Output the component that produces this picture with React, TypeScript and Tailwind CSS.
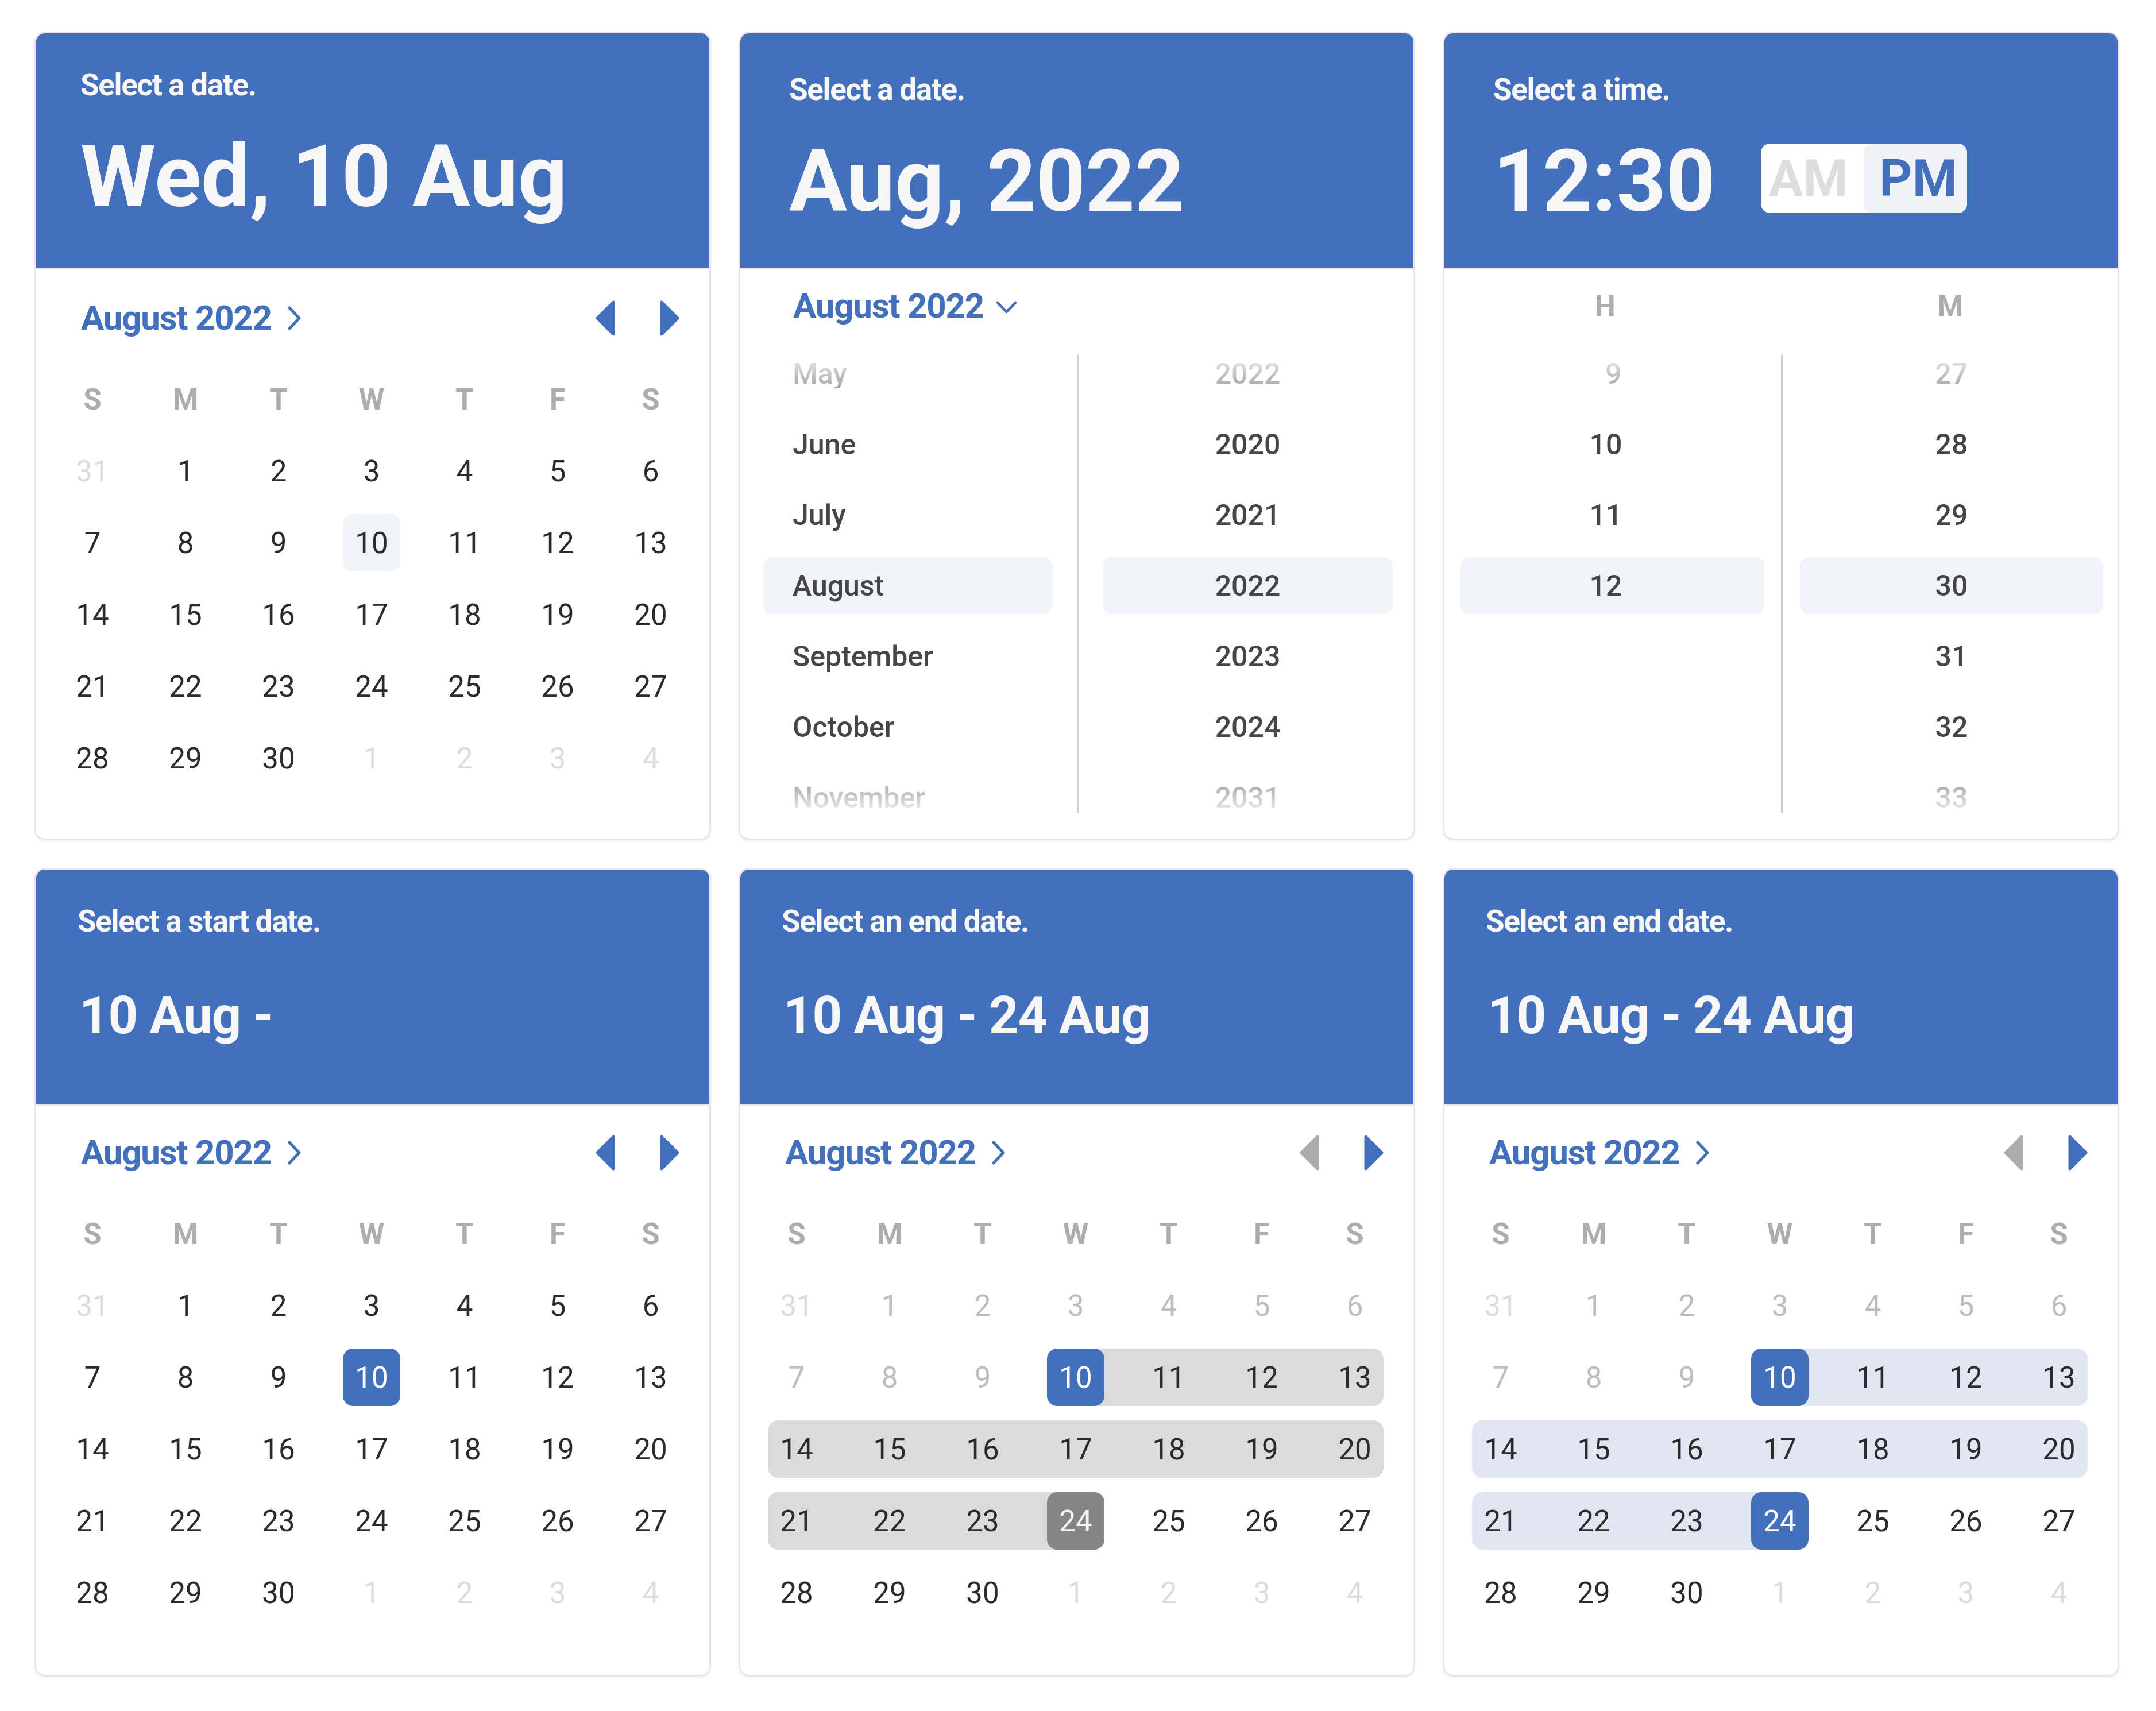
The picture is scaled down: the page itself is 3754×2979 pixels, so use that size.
import clsx from 'clsx';
import type { ReactNode } from 'react';

type Tone = 'normal' | 'outside' | 'disabled' | 'soft' | 'blue' | 'dark';
type Mode = 'soft' | 'blue' | 'rangeGray' | 'rangeBlue';

const TONES: Record<Tone, string> = {
    normal: 'text-[#2b2b2b]',
    outside: 'text-[#dcdcdc]',
    disabled: 'text-[#bdbdbd]',
    soft: 'bg-[#f0f3f9] text-[#2b2b2b]',
    blue: 'bg-[#4270bc] text-white',
    dark: 'bg-[#858585] text-[#f5f5f5]',
};

const WEEKS = [
    [31, 1, 2, 3, 4, 5, 6],
    [7, 8, 9, 10, 11, 12, 13],
    [14, 15, 16, 17, 18, 19, 20],
    [21, 22, 23, 24, 25, 26, 27],
    [28, 29, 30, 1, 2, 3, 4],
];

// which cells of each week sit on the range band
const BANDS: (number[] | null)[] = [null, [3, 6], [0, 6], [0, 3], null];

function toneFor(mode: Mode, w: number, i: number, n: number): Tone {
    const outside = (w === 0 && i === 0) || (w === 4 && i >= 3);
    if (outside) return 'outside';
    if (mode === 'soft' || mode === 'blue') {
        return n === 10 ? mode : 'normal';
    }
    if (n < 10) return 'disabled';
    if (n === 10) return 'blue';
    if (n === 24) return mode === 'rangeGray' ? 'dark' : 'blue';
    return 'normal';
}

function Card({ children }: { children: ReactNode }) {
    return (
        <div className="flex h-[1408px] w-[1178px] shrink-0 flex-col overflow-hidden rounded-[18px] border-[3px] border-[#e8e8e8] bg-white shadow-[0_3px_4px_rgba(0,0,0,0.04)]">
            {children}
        </div>
    );
}

function Header({ className, children }: { className?: string; children: ReactNode }) {
    return (
        <div
            className={clsx(
                'flex h-[411px] shrink-0 flex-col border-b-[3px] border-[#e6e6e6] bg-[#4270bc] text-[#f7f7f7]',
                className
            )}
        >
            {children}
        </div>
    );
}

function Label({ children }: { children: ReactNode }) {
    return <div className="text-[53px] font-bold leading-none tracking-[-0.025em]">{children}</div>;
}

function Caret({ dir, muted }: { dir: 'left' | 'right'; muted?: boolean }) {
    return (
        <svg
            width="34"
            height="62"
            viewBox="0 0 34 62"
            className={muted ? 'text-[#acacac]' : 'text-[#4270bc]'}
        >
            <path
                d={dir === 'left' ? 'M31 3 L31 59 L3 31 Z' : 'M3 3 L3 59 L31 31 Z'}
                fill="currentColor"
                stroke="currentColor"
                strokeWidth="5"
                strokeLinejoin="round"
            />
        </svg>
    );
}

function ChevronRight() {
    return (
        <svg width="23" height="42" viewBox="0 0 23 42" className="ml-[28px] text-[#4270bc]">
            <path
                d="M3 3 L20 21 L3 39"
                fill="none"
                stroke="currentColor"
                strokeWidth="5"
                strokeLinecap="round"
                strokeLinejoin="round"
            />
        </svg>
    );
}

function ChevronDown() {
    return (
        <svg width="37" height="23" viewBox="0 0 37 23" className="ml-[21px] mt-[4px] text-[#4270bc]">
            <path
                d="M3 3 L18.5 19 L34 3"
                fill="none"
                stroke="currentColor"
                strokeWidth="4.5"
                strokeLinecap="round"
                strokeLinejoin="round"
            />
        </svg>
    );
}

function DayCell({ n, tone }: { n: number; tone: Tone }) {
    return (
        <div
            className={clsx(
                'flex h-[100px] w-[100px] shrink-0 items-center justify-center rounded-[18px] text-[51px] leading-none',
                TONES[tone]
            )}
        >
            {n}
        </div>
    );
}

function Calendar({ mode, mutedPrev }: { mode: Mode; mutedPrev?: boolean }) {
    const band = mode === 'rangeGray' ? 'bg-[#dbdbdb]' : 'bg-[#e0e7f2]';
    const ranged = mode === 'rangeGray' || mode === 'rangeBlue';

    return (
        <div className={clsx('flex flex-col pl-[48px] pr-[52px]', mode === 'soft' ? 'pt-[35px]' : 'pt-[32px]')}>
            <div className="flex h-[100px] items-center">
                <span className="pl-[30px] text-[60px] font-bold leading-none tracking-[-0.02em] text-[#4270bc]">
                    August 2022
                </span>
                <ChevronRight />
                <div className="ml-auto flex items-center gap-[78px]">
                    <Caret dir="left" muted={mutedPrev} />
                    <Caret dir="right" />
                </div>
            </div>

            <div className="mt-[41px] flex flex-col gap-[25px]">
                <div className="flex gap-[62px]">
                    {['S', 'M', 'T', 'W', 'T', 'F', 'S'].map((d, i) => (
                        <div
                            key={i}
                            className="flex h-[100px] w-[100px] items-center justify-center text-[51px] font-bold leading-none text-[#adadad]"
                        >
                            {d}
                        </div>
                    ))}
                </div>

                {WEEKS.map((week, w) => {
                    const cells = week.map((n, i) => ({ n, tone: toneFor(mode, w, i, n) }));
                    const b = ranged ? BANDS[w] : null;
                    if (!b) {
                        return (
                            <div key={w} className="flex gap-[62px]">
                                {cells.map((c, i) => (
                                    <DayCell key={i} n={c.n} tone={c.tone} />
                                ))}
                            </div>
                        );
                    }
                    return (
                        <div key={w} className="flex gap-[62px]">
                            {cells.slice(0, b[0]).map((c, i) => (
                                <DayCell key={i} n={c.n} tone={c.tone} />
                            ))}
                            <div className={clsx('flex gap-[62px] rounded-[18px]', band)}>
                                {cells.slice(b[0], b[1] + 1).map((c, i) => (
                                    <DayCell key={i} n={c.n} tone={c.tone} />
                                ))}
                            </div>
                            {cells.slice(b[1] + 1).map((c, i) => (
                                <DayCell key={i} n={c.n} tone={c.tone} />
                            ))}
                        </div>
                    );
                })}
            </div>
        </div>
    );
}

const FADE_TOP = 'bg-linear-to-b from-[#e6e6e6] to-[#a4a4a4] bg-clip-text text-transparent';
const FADE_BOTTOM = 'bg-linear-to-b from-[#a8a8a8] to-[#f0f0f0] bg-clip-text text-transparent';

function PickItem({
    children,
    active,
    fade,
    className,
}: {
    children?: ReactNode;
    active?: boolean;
    fade?: 'top' | 'bottom';
    className?: string;
}) {
    return (
        <div
            className={clsx(
                'flex h-[99px] shrink-0 items-center rounded-[16px] text-[50px] font-medium leading-none text-[#464646]',
                active && 'bg-[#f0f3f9]',
                className
            )}
        >
            <span className={clsx(fade === 'top' && FADE_TOP, fade === 'bottom' && FADE_BOTTOM)}>
                {children}
            </span>
        </div>
    );
}

function Divider() {
    return <div className="mt-[16px] h-[799px] w-[3px] shrink-0 rounded-full bg-[#cfcfcf]" />;
}

function MonthYearCard() {
    const months: [string, boolean?, ('top' | 'bottom')?][] = [
        ['May', false, 'top'],
        ['June'],
        ['July'],
        ['August', true],
        ['September'],
        ['October'],
        ['November', false, 'bottom'],
    ];
    const years: [string, boolean?, ('top' | 'bottom')?][] = [
        ['2022', false, 'top'],
        ['2020'],
        ['2021'],
        ['2022', true],
        ['2023'],
        ['2024'],
        ['2031', false, 'bottom'],
    ];

    return (
        <Card>
            <Header className="pl-[85px] pt-[72px]">
                <Label>Select a date.</Label>
                <div className="mt-[58px] text-[150px] font-bold leading-none">Aug, 2022</div>
            </Header>
            <div className="flex min-h-0 flex-1 flex-col">
                <div className="mt-[14px] flex h-[100px] shrink-0 items-center pl-[92px]">
                    <span className="text-[60px] font-bold leading-none tracking-[-0.02em] text-[#4270bc]">
                        August 2022
                    </span>
                    <ChevronDown />
                </div>
                <div className="mt-[18px] flex min-h-0 flex-1 overflow-hidden px-[40px]">
                    <div className="flex w-[504px] shrink-0 flex-col gap-[24px]">
                        {months.map(([m, active, fade], i) => (
                            <PickItem key={i} active={active} fade={fade} className="pl-[51px]">
                                {m}
                            </PickItem>
                        ))}
                    </div>
                    <div className="mx-[42px] flex">
                        <Divider />
                    </div>
                    <div className="flex w-[505px] shrink-0 flex-col gap-[24px]">
                        {years.map(([y, active, fade], i) => (
                            <PickItem key={i} active={active} fade={fade} className="justify-center">
                                {y}
                            </PickItem>
                        ))}
                    </div>
                </div>
            </div>
        </Card>
    );
}

function TimeCard() {
    const hours: [string, boolean?, ('top' | 'bottom')?][] = [
        ['9', false, 'top'],
        ['10'],
        ['11'],
        ['12', true],
        [''],
        [''],
        [''],
    ];
    const minutes: [string, boolean?, ('top' | 'bottom')?][] = [
        ['27', false, 'top'],
        ['28'],
        ['29'],
        ['30', true],
        ['31'],
        ['32'],
        ['33', false, 'bottom'],
    ];

    return (
        <Card>
            <Header className="pl-[85px] pt-[72px]">
                <Label>Select a time.</Label>
                <div className="mt-[58px] flex items-start">
                    <span className="text-[150px] font-bold leading-none">12:30</span>
                    <div className="ml-[79px] mt-[9px] flex h-[121px] w-[359px] overflow-hidden rounded-[16px] bg-white">
                        <div className="flex w-[180px] items-center justify-center pr-[14px] text-[89px] font-bold leading-none text-[#dddddd]">
                            AM
                        </div>
                        <div className="flex flex-1 items-center justify-center rounded-[14px] bg-[#eff3f9] pl-[10px] text-[89px] font-bold leading-none text-[#4270bc]">
                            PM
                        </div>
                    </div>
                </div>
            </Header>
            <div className="flex min-h-0 flex-1 flex-col">
                <div className="mt-[14px] flex h-[100px] shrink-0 items-center px-[28px] text-[51px] font-bold leading-none text-[#adadad]">
                    <div className="w-[529px] pr-[24px] text-center">H</div>
                    <div className="ml-[62px] w-[528px] text-center">M</div>
                </div>
                <div className="mt-[18px] flex min-h-0 flex-1 overflow-hidden px-[28px]">
                    <div className="flex w-[529px] shrink-0 flex-col gap-[24px]">
                        {hours.map(([h, active, fade], i) => (
                            <PickItem key={i} active={active} className="justify-center pr-[24px]">
                                <span
                                    className={clsx(
                                        'inline-block w-[56px] text-right',
                                        fade === 'top' && FADE_TOP
                                    )}
                                >
                                    {h}
                                </span>
                            </PickItem>
                        ))}
                    </div>
                    <div className="ml-[29px] mr-[30px] flex">
                        <Divider />
                    </div>
                    <div className="flex w-[528px] shrink-0 flex-col gap-[24px]">
                        {minutes.map(([m, active, fade], i) => (
                            <PickItem key={i} active={active} fade={fade} className="justify-center">
                                {m}
                            </PickItem>
                        ))}
                    </div>
                </div>
            </div>
        </Card>
    );
}

function RangeCard({
    label,
    title,
    mode,
    mutedPrev,
}: {
    label: string;
    title: string;
    mode: Mode;
    mutedPrev?: boolean;
}) {
    return (
        <Card>
            <Header className="pl-[72px] pt-[64px]">
                <Label>{label}</Label>
                <div className="ml-[3px] mt-[93px] text-[90px] font-bold leading-none tracking-[-0.012em]">
                    {title}
                </div>
            </Header>
            <Calendar mode={mode} mutedPrev={mutedPrev} />
        </Card>
    );
}

export default function App() {
    return (
        <div className="flex h-[2979px] w-[3754px] flex-col gap-[48px] bg-white pl-[60px] pt-[55px] font-['Roboto',sans-serif]">
            <div className="flex gap-[48px]">
                <Card>
                    <Header className="pl-[77px] pt-[64px]">
                        <Label>Select a date.</Label>
                        <div className="mt-[58px] text-[150px] font-bold leading-none">Wed, 10 Aug</div>
                    </Header>
                    <Calendar mode="soft" />
                </Card>
                <MonthYearCard />
                <TimeCard />
            </div>
            <div className="flex gap-[48px]">
                <RangeCard label="Select a start date." title="10 Aug -" mode="blue" />
                <RangeCard
                    label="Select an end date."
                    title="10 Aug - 24 Aug"
                    mode="rangeGray"
                    mutedPrev
                />
                <RangeCard
                    label="Select an end date."
                    title="10 Aug - 24 Aug"
                    mode="rangeBlue"
                    mutedPrev
                />
            </div>
        </div>
    );
}
